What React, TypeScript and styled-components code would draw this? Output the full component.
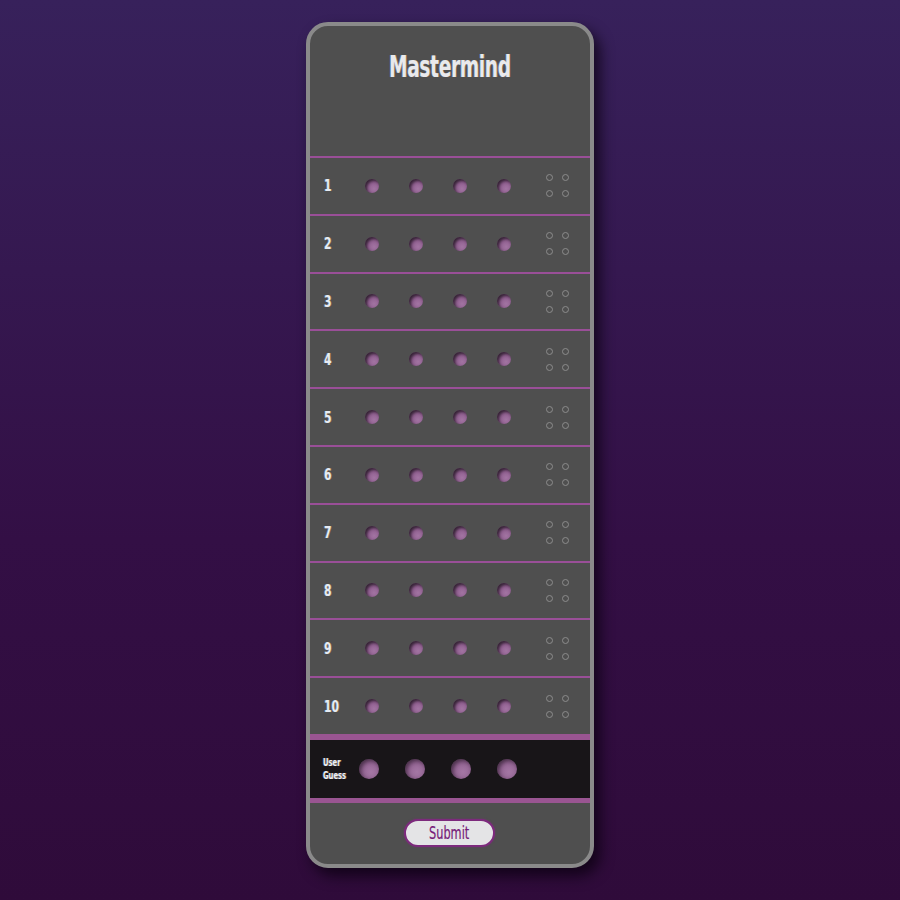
import React from "react";
import styled, { createGlobalStyle } from "styled-components";

const GlobalStyle = createGlobalStyle`
  html, body {
    margin: 0;
    padding: 0;
    height: 100%;
  }
  body {
    background: linear-gradient(180deg, #37215b 0%, #330f45 60%, #2f0b3a 100%);
    font-family: "DejaVu Sans Condensed", "Liberation Sans", sans-serif;
    min-height: 900px;
  }
`;

const Page = styled.div`
  display: flex;
  justify-content: center;
  padding-top: 22px;
  padding-right: 1px;
`;

const Board = styled.div`
  box-sizing: border-box;
  width: 288px;
  height: 846px;
  border: 4px solid #8a8a8a;
  border-radius: 22px;
  background: #4f4f4f;
  box-shadow: 6px 8px 14px rgba(10, 0, 15, 0.75);
  overflow: hidden;
  display: flex;
  flex-direction: column;
`;

const Header = styled.header`
  height: 130px;
  flex: none;
  display: flex;
  justify-content: center;
  align-items: flex-start;
`;

const Title = styled.h1`
  display: inline-block;
  margin: 23px 0 0;
  font-size: 31px;
  line-height: 34px;
  font-weight: 700;
  letter-spacing: -0.6px;
  color: #e9e9ec;
  transform: scaleX(0.67);
  text-shadow: -1px 0 rgba(110, 150, 210, 0.55), 1px 0 rgba(210, 150, 70, 0.55);
`;

const Row = styled.div`
  box-sizing: border-box;
  height: 57.8px;
  flex: none;
  border-top: 2px solid #9a4f98;
  display: flex;
  align-items: center;
  padding-left: 14px;
`;

const RowNumber = styled.span`
  display: inline-block;
  width: 41px;
  font-size: 16px;
  font-weight: 700;
  color: #e6ebf3;
  transform: scaleX(0.75);
  transform-origin: left center;
  text-shadow: -1px 0 rgba(110, 150, 210, 0.5), 1px 0 rgba(210, 150, 70, 0.5);
`;

const Holes = styled.div<{ $gap: number }>`
  display: flex;
  gap: ${(p) => p.$gap}px;
`;

const Hole = styled.span<{ $size: number }>`
  display: block;
  width: ${(p) => p.$size}px;
  height: ${(p) => p.$size}px;
  border-radius: 50%;
  background: radial-gradient(circle at 65% 70%, #a274a2 0%, #8d5c8d 55%, #6a466a 100%);
  box-shadow: inset 2px 2px 3px rgba(30, 20, 30, 0.75);
`;

const GuessHole = styled(Hole)`
  background: radial-gradient(circle at 60% 65%, #a477a4 0%, #946594 55%, #7a557a 100%);
  box-shadow: inset 2px 2px 4px rgba(20, 10, 20, 0.55);
`;

const Feedback = styled.div`
  margin-left: 35px;
  display: grid;
  grid-template-columns: repeat(2, 7px);
  grid-template-rows: repeat(2, 7px);
  column-gap: 9px;
  row-gap: 9px;
`;

const FeedbackPin = styled.span`
  box-sizing: border-box;
  width: 7px;
  height: 7px;
  border: 1px solid #8c8c8c;
  border-radius: 50%;
`;

const GuessRow = styled.div`
  box-sizing: border-box;
  flex: none;
  height: 69px;
  border-top: 6px solid #9a5592;
  border-bottom: 5px solid #9a5592;
  background: #181518;
  display: flex;
  align-items: center;
  padding-left: 13px;
`;

const GuessLabel = styled.span`
  display: inline-block;
  width: 36px;
  font-size: 10.5px;
  line-height: 13px;
  font-weight: 700;
  color: #eef0f5;
  transform: scaleX(0.72);
  transform-origin: left center;
  text-shadow: -1px 0 rgba(110, 150, 210, 0.5), 1px 0 rgba(210, 150, 70, 0.5);
`;

const Footer = styled.footer`
  flex: 1;
  display: flex;
  justify-content: center;
  align-items: center;
`;

const SubmitButton = styled.button`
  box-sizing: border-box;
  width: 91px;
  height: 28px;
  border: 2px solid #7d2a7d;
  border-radius: 14px;
  background: #e4e4e6;
  color: #761a78;
  font-family: "DejaVu Sans Condensed", "Liberation Sans", sans-serif;
  padding: 0 0 1px;
  cursor: pointer;
  display: flex;
  align-items: center;
  justify-content: center;
  box-shadow: 0 0 2px rgba(125, 42, 125, 0.7);
`;

const ButtonLabel = styled.span`
  display: inline-block;
  font-size: 17px;
  line-height: 20px;
  transform: scaleX(0.74);
  -webkit-text-stroke: 0.2px #761a78;
`;

const rows = Array.from({ length: 10 }, (_, i) => i + 1);

export default function App() {
  return (
    <>
      <GlobalStyle />
      <Page>
        <Board>
          <Header>
            <Title>Mastermind</Title>
          </Header>
          {rows.map((n) => (
            <Row key={n}>
              <RowNumber>{n}</RowNumber>
              <Holes $gap={30}>
                {[0, 1, 2, 3].map((k) => (
                  <Hole key={k} $size={14} />
                ))}
              </Holes>
              <Feedback>
                {[0, 1, 2, 3].map((k) => (
                  <FeedbackPin key={k} />
                ))}
              </Feedback>
            </Row>
          ))}
          <GuessRow>
            <GuessLabel>
              User
              <br />
              Guess
            </GuessLabel>
            <Holes $gap={26}>
              {[0, 1, 2, 3].map((k) => (
                <GuessHole key={k} $size={20} />
              ))}
            </Holes>
          </GuessRow>
          <Footer>
            <SubmitButton>
              <ButtonLabel>Submit</ButtonLabel>
            </SubmitButton>
          </Footer>
        </Board>
      </Page>
    </>
  );
}
